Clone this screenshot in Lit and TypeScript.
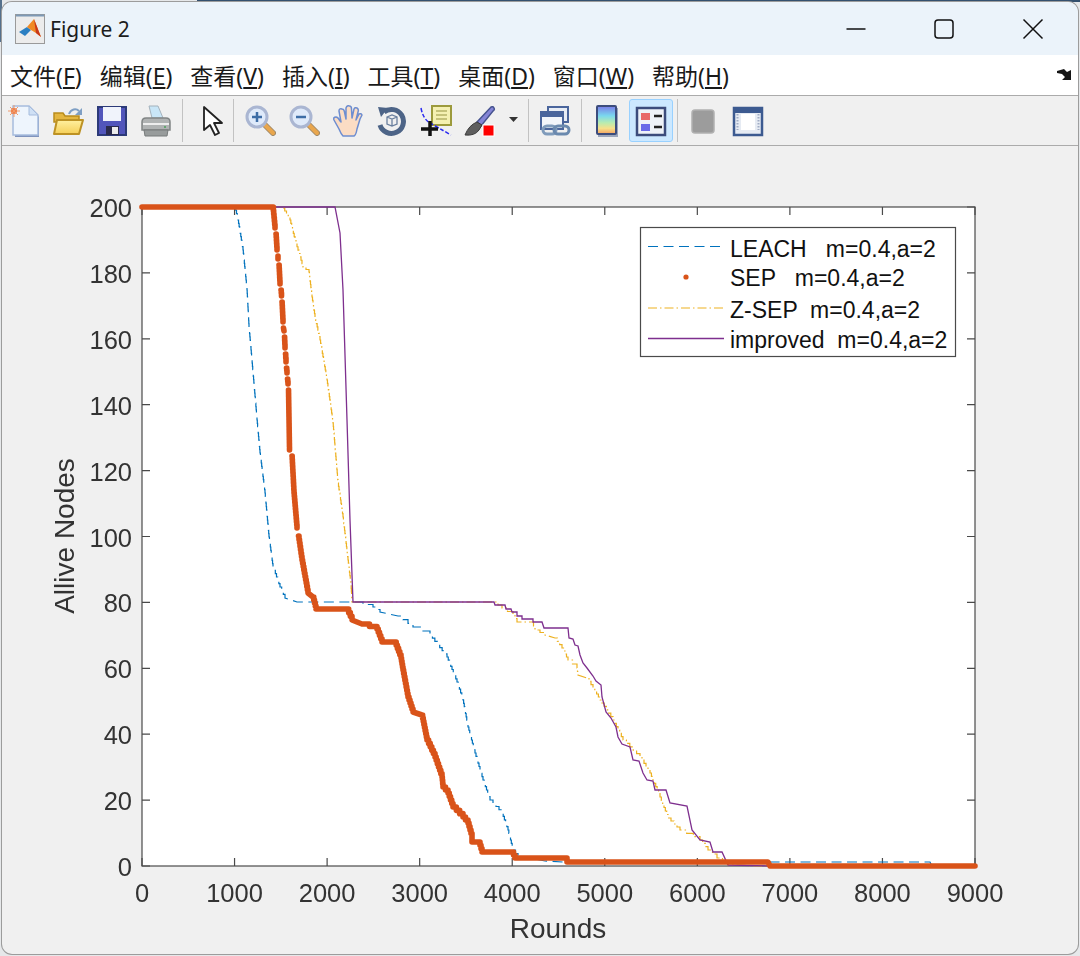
import { LitElement, css, html, svg } from "lit";
import { customElement } from "lit/decorators.js";

// all curve points are page pixels, the chart svg uses a matching viewBox
const LEACH =
  "235,207 238,220 243,250 247,290 249,327 253,373 257,420 260,453 265,493 269,537 273,567 280,587 285,598 297,602 353,602 373,607 380,612 398,616 413,627 430,635 447,657 457,682 463,700 468,727 475,753 483,780 490,800 502,813 508,830 513,850 518,857 530,858 545,861 563,862 930,862 932,866 975,866";
const ZSEP =
  "283,208 290,220 295,240 303,267 309,272 312,297 315,317 320,340 327,380 333,423 338,483 343,517 348,560 351,585 352,602 494,602 502,608 513,615 517,622 532,622 535,630 545,635 555,638 562,648 568,660 577,668 578,675 587,678 593,688 602,703 613,720 623,740 640,757 650,773 660,797 668,818 680,830 700,840 708,850 717,858 728,865 770,866";
const IMPROVED =
  "273,207 335,207 340,233 343,290 347,420 350,520 353,602 494,602 495,605 505,605 506,609 511,609 512,612 517,612 517,616 522,616 522,619 533,619 533,622 542,622 544,628 568,628 569,638 573,639 575,645 578,646 580,655 583,663 587,668 593,676 596,681 601,685 602,697 606,712 611,718 616,727 618,737 622,744 630,747 633,760 639,761 643,773 647,780 653,781 655,790 666,790 670,803 687,806 692,830 700,840 710,842 713,852 722,852 728,865 770,866";
const SEP = [
  "142,207 273,207 275,228",
  "276,234 277,250",
  "278,256 278,259",
  "279,265 280,284",
  "281,290 281.5,296",
  "282,302 283,322",
  "283.5,328 284,331",
  "284.5,337 285,348",
  "285.5,354 286,362",
  "286.5,368 287,373",
  "287.5,379 288,384",
  "288.5,390 289.5,450",
  "292,456 294,493 297,528",
  "298.5,536 302,560 308,593 313,597 316,609 347,609 352,620 362,624 377,629 382,642 395,642 401,658 403,670 408,697 413,712 422,715 427,740 435,757 442,777 443,787 448,793 453,807 463,817 468,823 472,837 472,842 479,842 482,852 512,852 515,858 567,858 567,862 768,862 770,866 975,866",
];

const X0 = 142;
const X1 = 975;
const Y0 = 866;
const Y1 = 207;
const xTicks = [0, 1000, 2000, 3000, 4000, 5000, 6000, 7000, 8000, 9000];
const yTicks = [0, 20, 40, 60, 80, 100, 120, 140, 160, 180, 200];
const xPos = (v: number) => X0 + (v / 9000) * (X1 - X0);
const yPos = (v: number) => Y0 - (v / 200) * (Y0 - Y1);

// node counts are integers, so sloped runs are really small stairs
function stairs(points: string, h = 3.3) {
  const pts = points.split(" ").map((p) => p.split(",").map(Number));
  const out: number[][] = [pts[0]];
  for (let i = 1; i < pts.length; i++) {
    const [x1, y1] = pts[i - 1];
    const [x2, y2] = pts[i];
    const n = Math.round((y2 - y1) / h);
    if (n < 2) {
      out.push(pts[i]);
      continue;
    }
    for (let k = 1; k <= n; k++) {
      const x = x1 + ((x2 - x1) * k) / n;
      out.push([x, y1 + ((y2 - y1) * (k - 1)) / n]);
      out.push([x, y1 + ((y2 - y1) * k) / n]);
    }
  }
  return out.map((p) => p.join(",")).join(" ");
}

const icons: Record<string, unknown> = {
  newFile: svg`
    <path d="M7 3h15l9 9v20H7z" fill="#7f93bd"/>
    <path d="M5 1h16l9 9v20H5z" fill="#eef5fd" stroke="#a6bcdd" stroke-width="1.5"/>
    <path d="M21 1v9h9z" fill="#cfe0f5" stroke="#a6bcdd"/>
    <circle cx="6" cy="6" r="3" fill="#ee6a2c"/>
    <path d="M6 0v12M0 6h12M2 2l8 8M10 2l-8 8" stroke="#f09a6c" stroke-width="1"/>`,
  open: svg`
    <defs>
      <linearGradient id="fold" x1="0" y1="0" x2="0" y2="1">
        <stop offset="0" stop-color="#fff0a0"/>
        <stop offset="1" stop-color="#f5cf58"/>
      </linearGradient>
    </defs>
    <path d="M2 8h9l2 3h14v6H2z" fill="#e4b63f" stroke="#b98c1c" stroke-width="1.5"/>
    <path d="M17 9c2-5 7-6 10-3" fill="none" stroke="#7f9fc4" stroke-width="2"/>
    <path d="M30 3v7h-7z" fill="#7f9fc4"/>
    <path d="M2 29 5 15h26l-4 14z" fill="url(#fold)" stroke="#bd9224" stroke-width="2" stroke-linejoin="round"/>`,
  save: svg`
    <rect x="2" y="2" width="28" height="28" fill="#5155bb" stroke="#2c3a78" stroke-width="2"/>
    <rect x="7" y="2" width="18" height="14" fill="#f0f3fb"/>
    <rect x="10" y="21" width="13" height="9" fill="#2a2a4c"/>
    <rect x="16" y="22" width="6" height="7" fill="#ececec"/>`,
  print: svg`
    <path d="M9 1h9l5 12H12z" fill="#c9e6f7" stroke="#a4b2bc"/>
    <path d="M2 17q0-4 4-4h20q4 0 4 4v8H2z" fill="#b0b3b3" stroke="#818585" stroke-width="1.5"/>
    <path d="M3 19h26" stroke="#ededed" stroke-width="2"/>
    <path d="M4 25h24l-1 6H5z" fill="#989c9c" stroke="#767a7a"/>
    <circle cx="25" cy="22" r="1" fill="#4aa05a"/>`,
  pointer: svg`
    <path d="M9 2v23l6-5 5 10 4-2-5-10h8z" fill="#fff" stroke="#222" stroke-width="1.8" stroke-linejoin="round"/>`,
  zoomIn: svg`
    <path d="M20 19l9 9" stroke="#a08a6a" stroke-width="6" stroke-linecap="round"/>
    <path d="M20 19l9 9" stroke="#e9a64c" stroke-width="4" stroke-linecap="round"/>
    <circle cx="13" cy="12" r="10" fill="#dfeafa" stroke="#aab6d2" stroke-width="3"/>
    <path d="M8 12h10M13 7v10" stroke="#3d6da6" stroke-width="2.5"/>`,
  zoomOut: svg`
    <path d="M20 19l9 9" stroke="#a08a6a" stroke-width="6" stroke-linecap="round"/>
    <path d="M20 19l9 9" stroke="#e9a64c" stroke-width="4" stroke-linecap="round"/>
    <circle cx="13" cy="12" r="10" fill="#dfeafa" stroke="#aab6d2" stroke-width="3"/>
    <path d="M8 12h10" stroke="#3d6da6" stroke-width="2.5"/>`,
  hand: svg`
    <path d="M7 24 2 15q-1-3 2-3 2 0 4 4l1 1L7 6q0-3 3-2 2 0 2.500 3L14 14V3q1-3 3.500-2 2 0 2 3l.500 9 2-9q1-2 3-1t1 4l-2 8 3-6q2-1 3 1l-2 4-3 10q-1 6-3 7H11q-2-2-4-7z" fill="#fbdcc4" stroke="#6d8dd0" stroke-width="1.500" stroke-linejoin="round"/>`,
  rotate: svg`
    <path d="M8 7a12 12 0 1 1-4 13" fill="none" stroke="#4d6487" stroke-width="5"/>
    <path d="M2 2l10 1-7 9z" fill="#4d6487"/>
    <path d="M11 12l5-2 5 2v7l-5 2-5-2zM11 12l5 2 5-2M16 14v7" fill="none" stroke="#6a7f9e" stroke-width="1.300"/>`,
  cursor: svg`
    <rect x="12" y="1" width="19" height="19" fill="#f4f0b2" stroke="#9c9a3c" stroke-width="2"/>
    <path d="M16 6h11M16 10h11M16 14h11" stroke="#b5b368" stroke-width="1.500"/>
    <path d="M1 3q2 11 9 15t21 12" fill="none" stroke="#2a2af0" stroke-width="1.500" stroke-dasharray="4 2"/>
    <path d="M1 24h17M10 16v15" stroke="#111" stroke-width="3.500"/>`,
  brush: svg`
    <path d="M13 17 27 2q2-1 3 1t-1 3L17 21z" fill="#8585d6" stroke="#46538f" stroke-width="1.500"/>
    <path d="M13 17q-8 3-12 13 10 1 14-5l3-5z" fill="#5e5e5e" stroke="#3a3a3a"/>
    <rect x="19" y="20" width="11" height="11" fill="#f00" stroke="#fff"/>`,
  link: svg`
    <rect x="9" y="2" width="20" height="15" fill="#e8edf5" stroke="#4a659c" stroke-width="2"/>
    <rect x="2" y="7" width="22" height="17" fill="#f2f5fa" stroke="#4a659c" stroke-width="2"/>
    <path d="M2 10h22" stroke="#4a659c" stroke-width="4"/>
    <rect x="4" y="21" width="13" height="8" rx="4" fill="none" stroke="#7f9bbb" stroke-width="3"/>
    <rect x="15" y="21" width="15" height="8" rx="4" fill="none" stroke="#6a89ae" stroke-width="3"/>`,
  colorbar: svg`
    <defs>
      <linearGradient id="cb" x1="0" y1="0" x2="0" y2="1">
        <stop offset="0" stop-color="#7a7ae8"/>
        <stop offset=".35" stop-color="#7ad8ee"/>
        <stop offset=".6" stop-color="#b8ecb0"/>
        <stop offset=".8" stop-color="#f7e08a"/>
        <stop offset="1" stop-color="#f3a060"/>
      </linearGradient>
    </defs>
    <rect x="7" y="3" width="20" height="29" fill="#9aa4ba"/>
    <rect x="6" y="1" width="19" height="28" rx="1" fill="url(#cb)" stroke="#3c4c7c" stroke-width="2"/>`,
  legend: svg`
    <rect x="2" y="3" width="28" height="27" fill="#eef2f8" stroke="#3c4c7c" stroke-width="2.500"/>
    <rect x="6" y="8" width="9" height="7" fill="#e86868"/>
    <rect x="6" y="19" width="9" height="7" fill="#6a6ae8"/>
    <path d="M19 11h8M19 22h8" stroke="#222" stroke-width="2.500"/>`,
  gray: svg`
    <rect x="4" y="5" width="22" height="23" rx="3" fill="#9c9c9c" stroke="#b0b0b0" stroke-width="1.500"/>`,
  frame: svg`
    <rect x="2" y="3" width="28" height="27" fill="#e6ebf3" stroke="#3c5a90" stroke-width="2.500"/>
    <path d="M2 6h28" stroke="#3c5a90" stroke-width="4"/>
    <rect x="9" y="9" width="14" height="16" fill="#fff"/>
    <path d="M5.500 9v16M26.500 9v16" stroke="#a0acc4" stroke-width="2" stroke-dasharray="1.500 1.500"/>`,
};

@customElement("app-root")
export class AppRoot extends LitElement {
  static styles = css`
    :host {
      display: block;
      box-sizing: border-box;
      width: 1080px;
      height: 956px;
      padding: 2px;
      background:
        linear-gradient(#34506e 0 2px, transparent 2px) 197px 0 no-repeat,
        linear-gradient(90deg, #54708c 0 2px, transparent 2px) 0 0 / 100% 42px no-repeat,
        #e6e8ea;
    }
    .window {
      display: flex;
      flex-direction: column;
      height: 100%;
      overflow: hidden;
      border-radius: 10px;
      background: #f0f0f0;
      box-shadow: 0 0 0 1px #9c9c9c;
    }
    .title {
      display: flex;
      align-items: center;
      flex: none;
      height: 53px;
      background: #ebf3fa;
      font: 21px "Noto Sans", sans-serif;
      color: #1c1c1c;
    }
    .logo {
      width: 30px;
      height: 30px;
      margin: 0 5px 0 13px;
    }
    .controls {
      display: flex;
      margin-left: auto;
    }
    .ctl {
      display: flex;
      align-items: center;
      justify-content: center;
      width: 88px;
      height: 53px;
    }
    .ctl:last-child {
      width: 90px;
    }
    .ctl svg {
      width: 22px;
      height: 22px;
    }
    .menu {
      display: flex;
      align-items: center;
      flex: none;
      gap: 18px;
      height: 40px;
      padding-left: 8px;
      background: #fff;
      font: 23px "Noto Sans", "Noto Sans CJK SC", sans-serif;
      color: #1a1a1a;
      white-space: nowrap;
    }
    .menu u {
      text-underline-offset: 2px;
    }
    .dock {
      width: 15px;
      height: 12px;
      margin-left: auto;
      margin-right: 6px;
    }
    .toolbar {
      display: flex;
      align-items: center;
      flex: none;
      height: 49px;
      border-top: 1px solid #ababab;
      border-bottom: 1px solid #ababab;
      background: #f0f0f0;
    }
    .tool {
      display: flex;
      align-items: center;
      justify-content: center;
      box-sizing: border-box;
      width: 44px;
      height: 43px;
    }
    .tool svg {
      width: 32px;
      height: 32px;
      filter: blur(0.6px);
    }
    .tool.on {
      border: 1px solid #99d1ff;
      border-radius: 3px;
      background: #cce8ff;
    }
    .sep {
      width: 1px;
      height: 43px;
      margin: 0 4px;
      background: #c2c2c2;
    }
    .sep.wide {
      margin-right: 6px;
    }
    .sep.flush {
      margin-left: 0;
    }
    .sep.narrow {
      margin-right: 3px;
    }
    .drop {
      width: 9px;
      height: 5px;
      margin: 0 6px 2px 7px;
    }
    .figure {
      flex: 1;
      min-height: 0;
    }
    .figure svg {
      display: block;
      width: 100%;
      height: 100%;
      filter: blur(0.35px);
    }
    .axes {
      fill: #fff;
      stroke: #4a4a4a;
      stroke-width: 1.2;
    }
    .tick {
      stroke: #4a4a4a;
      stroke-width: 1.2;
    }
    .label {
      font: 25.5px "Liberation Sans", sans-serif;
      fill: #333;
    }
    .name {
      font: 28px "Liberation Sans", sans-serif;
      fill: #333;
    }
    .curve {
      fill: none;
    }
    .leach {
      stroke: #0072bd;
      stroke-width: 1.2;
      stroke-dasharray: 10 5.5;
    }
    .zsep {
      stroke: #edb120;
      stroke-width: 1.2;
      stroke-dasharray: 9 3 1.5 3;
    }
    .improved {
      stroke: #7e2f8e;
      stroke-width: 1.3;
    }
    .sep-line {
      stroke: #d95319;
      stroke-width: 5.6;
      stroke-linecap: round;
      stroke-linejoin: round;
    }
    .legend-box {
      fill: #fff;
      stroke: #4a4a4a;
      stroke-width: 1.2;
    }
    .legend-text {
      font: 23px "Liberation Sans", sans-serif;
      fill: #111;
      white-space: pre;
    }
  `;

  private tool(name: string, on = false) {
    return html`<div class="tool ${on ? "on" : ""}">
      <svg viewBox="0 0 32 32">${icons[name]}</svg>
    </div>`;
  }

  private chart() {
    return svg`
      <rect class="axes" x=${X0} y=${Y1} width=${X1 - X0} height=${Y0 - Y1}></rect>
      ${xTicks.map((v) => {
        const x = xPos(v);
        return svg`
          <path class="tick" d="M${x} ${Y0}v-8M${x} ${Y1}v8"></path>
          <text class="label" x=${x} y="902" text-anchor="middle">${v}</text>`;
      })}
      ${yTicks.map((v) => {
        const y = yPos(v);
        return svg`
          <path class="tick" d="M${X0} ${y}h8M${X1} ${y}h-8"></path>
          <text class="label" x="132" y=${y + 10} text-anchor="end">${v}</text>`;
      })}
      <polyline class="curve leach" points=${stairs(LEACH)}></polyline>
      <polyline class="curve zsep" points=${stairs(ZSEP)}></polyline>
      <polyline class="curve improved" points=${IMPROVED}></polyline>
      ${SEP.map((p) => svg`<polyline class="curve sep-line" points=${stairs(p)}></polyline>`)}
      <text class="name" x="558" y="938" text-anchor="middle">Rounds</text>
      <text class="name" transform="translate(74 536) rotate(-90)" text-anchor="middle">Allive Nodes</text>

      <rect class="legend-box" x="640.500" y="227.500" width="315" height="129"></rect>
      <path class="curve leach" d="M648 246.500h76"></path>
      <circle cx="686" cy="277" r="2.600" fill="#d95319"></circle>
      <path class="curve zsep" d="M648 308h76"></path>
      <path class="curve improved" d="M648 338.500h76"></path>
      <text class="legend-text" x="730" y="256.500">LEACH   m=0.4,a=2</text>
      <text class="legend-text" x="730" y="286">SEP   m=0.4,a=2</text>
      <text class="legend-text" x="730" y="317.500">Z-SEP  m=0.4,a=2</text>
      <text class="legend-text" x="730" y="347.500">improved  m=0.4,a=2</text>`;
  }

  render() {
    return html`
      <div class="window">
        <div class="title">
          <svg class="logo" viewBox="0 0 30 30">
            <rect x=".5" y=".5" width="29" height="29" fill="#ececec" stroke="#9a9a9a"></rect>
            <path d="M1 1.500h28" stroke="#7d99b5" stroke-width="2"></path>
            <path d="M4 18l8-5 4 3-6 6z" fill="#2b7fc2"></path>
            <path d="M12 13l7-8 7 18-5-4-5-3z" fill="#f08a24"></path>
            <path d="M19 5l7 18-5-4z" fill="#c8381a"></path>
          </svg>
          Figure 2
          <div class="controls">
            <div class="ctl">
              <svg viewBox="0 0 22 22"><path d="M1.500 11h19" stroke="#111" stroke-width="1.500"></path></svg>
            </div>
            <div class="ctl">
              <svg viewBox="0 0 22 22"><rect x="2" y="2" width="18" height="18" rx="3" fill="none" stroke="#111" stroke-width="1.500"></rect></svg>
            </div>
            <div class="ctl">
              <svg viewBox="0 0 22 22"><path d="M1.500 1.500l19 19M20.500 1.500l-19 19" stroke="#111" stroke-width="1.500"></path></svg>
            </div>
          </div>
        </div>
        <div class="menu">
          <span>文件(<u>F</u>)</span>
          <span>编辑(<u>E</u>)</span>
          <span>查看(<u>V</u>)</span>
          <span>插入(<u>I</u>)</span>
          <span>工具(<u>T</u>)</span>
          <span>桌面(<u>D</u>)</span>
          <span>窗口(<u>W</u>)</span>
          <span>帮助(<u>H</u>)</span>
          <svg class="dock" viewBox="0 0 15 12">
            <path d="M0 2 7 0l3 3 4-2v10H5l3-3-3-3-5-1z" fill="#151515"></path>
          </svg>
        </div>
        <div class="toolbar">
          ${this.tool("newFile")}${this.tool("open")}${this.tool("save")}${this.tool("print")}
          <div class="sep wide"></div>
          ${this.tool("pointer")}
          <div class="sep flush"></div>
          ${this.tool("zoomIn")}${this.tool("zoomOut")}${this.tool("hand")}${this.tool("rotate")}${this.tool("cursor")}${this.tool("brush")}
          <svg class="drop" viewBox="0 0 9 5"><path d="M0 0h9L4.500 5z" fill="#333"></path></svg>
          <div class="sep"></div>
          ${this.tool("link")}
          <div class="sep narrow"></div>
          ${this.tool("colorbar")}${this.tool("legend", true)}
          <div class="sep"></div>
          ${this.tool("gray")}${this.tool("frame")}
        </div>
        <div class="figure">
          <svg viewBox="2 146 1076 808">${this.chart()}</svg>
        </div>
      </div>
    `;
  }
}
